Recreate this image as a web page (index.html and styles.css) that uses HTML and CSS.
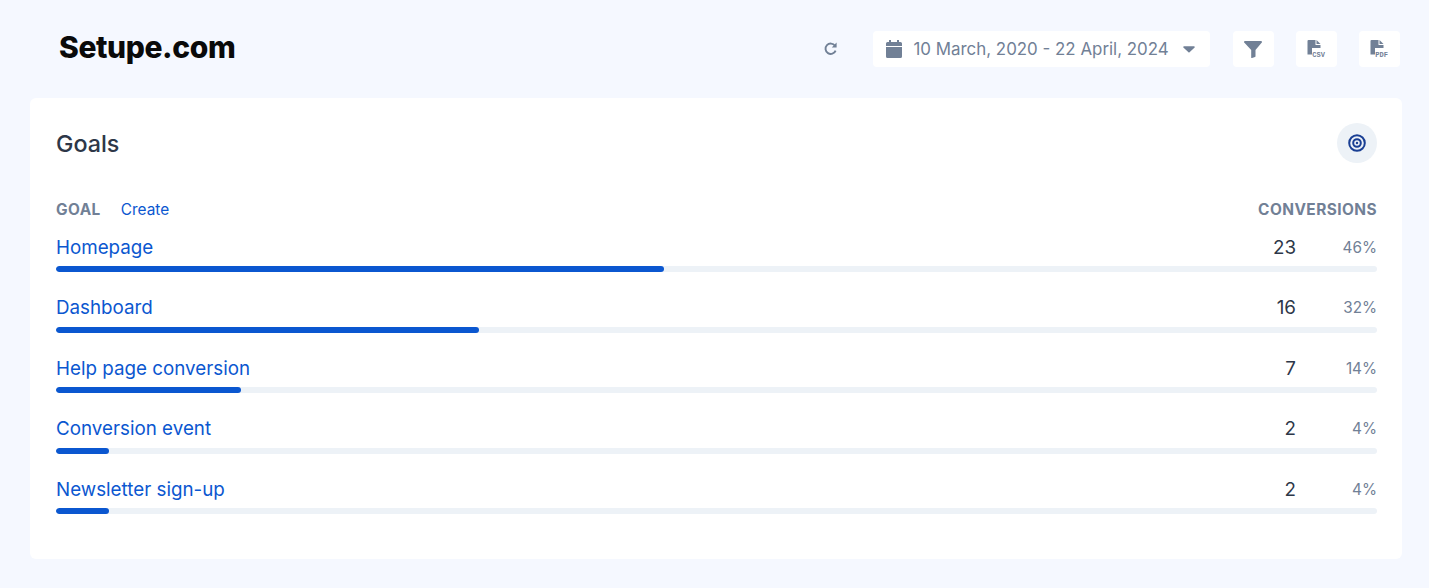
FILE: index.html
```html
<!DOCTYPE html>
<html lang="en">
<head>
<meta charset="utf-8">
<title>Goals</title>
<link rel="stylesheet" href="styles.css">
</head>
<body>
<header class="topbar">
  <div class="logo">Setupe.com</div>
  <div class="tools">
    <button class="refresh" aria-label="Refresh">
      <svg width="16" height="16" viewBox="0 0 16 16" fill="none" stroke="#718096" stroke-width="1.9"><path d="M12.6 9.6A5.2 5.2 0 1 1 12 4.8"/><path d="M13.6 1.6v4.9H8.8z" fill="#718096" stroke="none"/></svg>
    </button>
    <div class="datepicker">
      <svg width="16" height="18" viewBox="0 0 16 18" fill="#718096"><path d="M3 0h2v2h6V0h2v2h1.5A1.5 1.5 0 0 1 16 3.500V6H0V3.500A1.500 1.500 0 0 1 1.500 2H3zM0 7h16v9.500a1.500 1.500 0 0 1-1.500 1.500h-13A1.500 1.500 0 0 1 0 16.500z"/></svg>
      <span class="range">10 March, 2020 - 22 April, 2024</span>
      <svg class="caret" width="12" height="7" viewBox="0 0 13 7" fill="#718096"><path d="M1 0h11a.8.8 0 0 1 .6 1.300L7.100 6.500a.8.8 0 0 1-1.200 0L.4 1.300A.8.8 0 0 1 1 0z"/></svg>
    </div>
    <button class="square filter" aria-label="Filter">
      <svg width="18" height="17" viewBox="0 0 18 17" fill="#718096"><path d="M1 0h16a1 1 0 0 1 .8 1.600L11.500 9v6.200a1 1 0 0 1-.5.800l-3 1a.6.6 0 0 1-.8-.6V9L.2 1.600A1 1 0 0 1 1 0z"/></svg>
    </button>
    <button class="square file" aria-label="CSV">
      <span class="fileicon"><svg width="15" height="17" viewBox="0 0 14 17" fill="#718096"><path d="M1 0h7v5h5v3H4.500v6.500H0V1a1 1 0 0 1 1-1zM9 0l4 4H9z"/></svg><span class="filetag">CSV</span></span>
    </button>
    <button class="square file" aria-label="PDF">
      <span class="fileicon"><svg width="15" height="17" viewBox="0 0 14 17" fill="#718096"><path d="M1 0h7v5h5v3H4.500v6.500H0V1a1 1 0 0 1 1-1zM9 0l4 4H9z"/></svg><span class="filetag">PDF</span></span>
    </button>
  </div>
</header>
<main class="card">
  <div class="card-head">
    <h2 class="title">Goals</h2>
    <div class="badge">
      <svg width="18" height="18" viewBox="0 0 18 18" fill="none" stroke="#1a3f94" stroke-width="2"><circle cx="9" cy="9" r="7.800"/><circle cx="9" cy="9" r="3.800"/><circle cx="9" cy="9" r="1.200" fill="#1a3f94" stroke="none"/></svg>
    </div>
  </div>
  <div class="cols">
    <div class="cols-left"><span class="col-label">GOAL</span><a class="create">Create</a></div>
    <span class="col-label">CONVERSIONS</span>
  </div>
  <ul class="rows">
    <li class="row">
      <div class="row-top"><a class="name">Homepage</a><span class="count">23</span><span class="pct">46%</span></div>
      <div class="track"><div class="fill" style="width:46%"></div></div>
    </li>
    <li class="row">
      <div class="row-top"><a class="name">Dashboard</a><span class="count">16</span><span class="pct">32%</span></div>
      <div class="track"><div class="fill" style="width:32%"></div></div>
    </li>
    <li class="row">
      <div class="row-top"><a class="name">Help page conversion</a><span class="count">7</span><span class="pct">14%</span></div>
      <div class="track"><div class="fill" style="width:14%"></div></div>
    </li>
    <li class="row">
      <div class="row-top"><a class="name">Conversion event</a><span class="count">2</span><span class="pct">4%</span></div>
      <div class="track"><div class="fill" style="width:4%"></div></div>
    </li>
    <li class="row">
      <div class="row-top"><a class="name">Newsletter sign-up</a><span class="count">2</span><span class="pct">4%</span></div>
      <div class="track"><div class="fill" style="width:4%"></div></div>
    </li>
  </ul>
</main>
</body>
</html>
```
FILE: styles.css
```css
* { box-sizing: border-box; }
html, body { height: 100%; }
body {
  margin: 0;
  background: #f5f8ff;
  font-family: Inter, "Liberation Sans", sans-serif;
  color: #2d3748;
  overflow: hidden;
}
.topbar {
  display: flex;
  align-items: center;
  justify-content: space-between;
  height: 98px;
  padding: 0 29px 0 59px;
}
.logo {
  font-family: Inter, sans-serif;
  font-weight: 800;
  font-size: 30px;
  letter-spacing: -0.4px;
  color: #0a0a0a;
  margin-top: -4px;
}
.tools {
  display: flex;
  align-items: center;
}
button {
  border: 0;
  padding: 0;
  background: none;
  display: flex;
  align-items: center;
  justify-content: center;
}
.refresh { width: 16px; height: 36px; margin-right: 34px; }
.datepicker {
  display: flex;
  align-items: center;
  width: 337px;
  height: 36px;
  padding: 0 15px 0 13px;
  background: #fff;
  border-radius: 4px;
  margin-right: 23px;
  color: #718096;
  font-size: 16.900px;
}
.range { margin-left: 12px; white-space: nowrap; }
.caret { margin-left: auto; }
.square {
  width: 41.500px;
  height: 36px;
  background: #fff;
  border-radius: 4px;
}
.file { margin-left: 21.500px; }
.fileicon { position: relative; display: block; width: 18px; height: 18px; }
.fileicon svg { position: absolute; left: 0; top: 0; }
.filetag {
  position: absolute;
  left: 5px;
  top: 11px;
  font-family: "Liberation Mono", monospace;
  font-weight: 700;
  font-size: 7px;
  line-height: 8px;
  color: #718096;
}
.card {
  margin: 0 27px 0 30px;
  height: 461px;
  padding: 25px 25px 0 26px;
  background: #fff;
  border-radius: 6px;
}
.card-head {
  display: flex;
  align-items: center;
  justify-content: space-between;
  height: 40px;
}
.title { margin: 0; font-size: 23.300px; font-weight: 500; color: #2d3748; }
.badge {
  width: 40px;
  height: 40px;
  border-radius: 50%;
  background: #edf2f7;
  display: flex;
  align-items: center;
  justify-content: center;
}
.cols {
  display: flex;
  justify-content: space-between;
  align-items: center;
  margin-top: 36px;
  height: 20px;
}
.cols-left { display: flex; align-items: center; gap: 20px; }
.col-label { font-size: 15.400px; font-weight: 700; color: #718096; letter-spacing: 0.45px; }
.create { font-size: 15.400px; color: #0b57d0; }
.rows { list-style: none; margin: 0; padding: 0; }
.row { height: 60.500px; padding-top: 13px; }
.row-top { display: flex; align-items: center; height: 30px; }
.name { font-size: 18.800px; color: #0b57d0; }
.count { margin-left: auto; font-size: 18.800px; color: #2d3748; }
.pct { width: 81px; text-align: right; font-size: 15.300px; color: #718096; }
.track { height: 6px; margin-top: 4px; background: #edf2f7; border-radius: 3px; overflow: hidden; }
.fill { height: 100%; background: #0b57d0; border-radius: 3px; }
```
